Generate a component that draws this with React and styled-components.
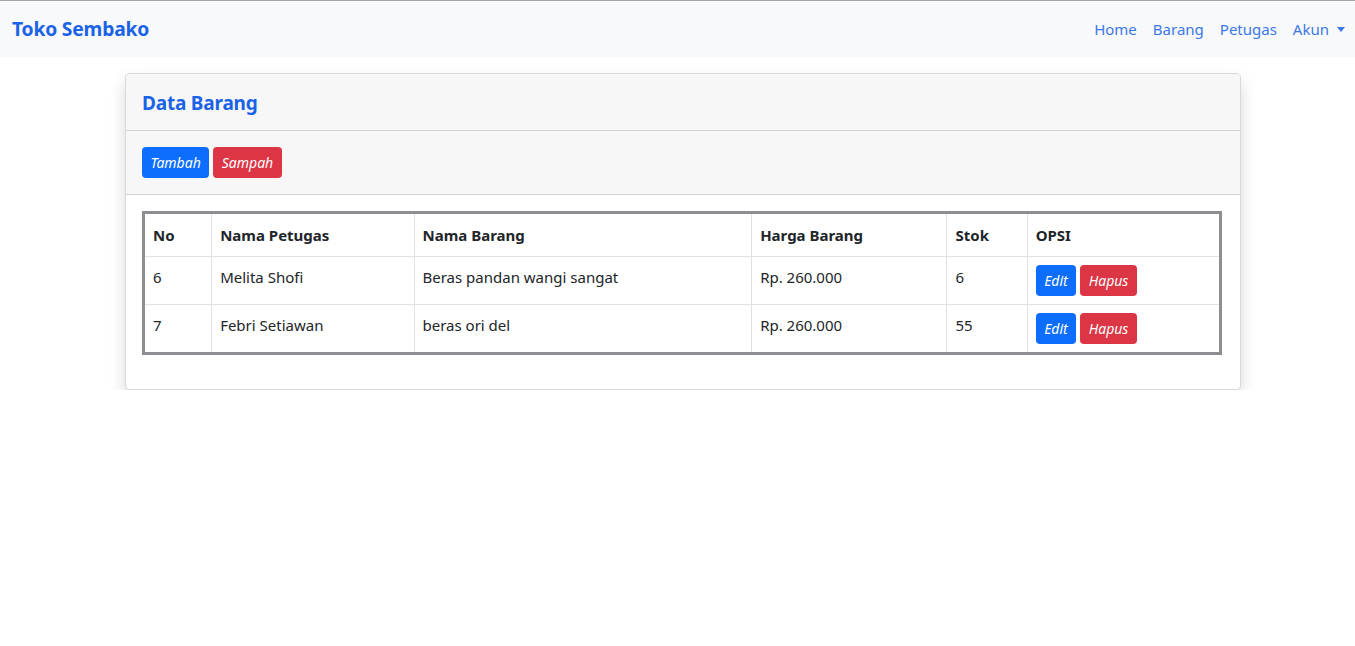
import React from "react";
import styled, { createGlobalStyle } from "styled-components";

const Global = createGlobalStyle`
  * { box-sizing: border-box; }
  html, body { margin: 0; padding: 0; background: #fff; }
  body {
    font-family: "Noto Sans", "Open Sans", sans-serif;
    font-size: 15px;
    line-height: 1.5;
    color: #212529;
    border-top: 1px solid #a6a6a6;
  }
`;

const Navbar = styled.nav`
  display: flex;
  align-items: center;
  justify-content: space-between;
  height: 56px;
  padding: 8px 2px 8px 12px;
  background: #f8f9fa;
`;

const Brand = styled.a`
  font-size: 19.3px;
  font-weight: 700;
  color: #1a63e6;
  text-decoration: none;
  letter-spacing: -0.2px;
`;

const NavList = styled.ul`
  display: flex;
  list-style: none;
  margin: 0;
  padding: 0;
`;

const NavLink = styled.a`
  display: flex;
  align-items: center;
  padding: 9px 8px 8px;
  color: #3b78e7;
  text-decoration: none;
  font-size: 15px;
`;

const Caret = styled.span`
  display: inline-block;
  margin-left: 8px;
  border-top: 5px solid #3b78e7;
  border-left: 4px solid transparent;
  border-right: 4px solid transparent;
`;

const Card = styled.section`
  width: 1116px;
  margin: 16px 0 0 125px;
  border: 1px solid rgba(0, 0, 0, 0.15);
  border-radius: 5px;
  background: #fff;
  box-shadow: 0 8px 16px rgba(0, 0, 0, 0.15);
  overflow: hidden;
`;

const CardHeader = styled.div`
  height: ${(p) => p.$h}px;
  display: flex;
  align-items: center;
  padding: 0 16px;
  background: #f7f7f7;
  border-bottom: 1px solid rgba(0, 0, 0, 0.15);
  gap: 4px;
`;

const Title = styled.h5`
  margin: 2px 0 0;
  font-size: 19px;
  font-weight: 700;
  color: #1a63e6;
  letter-spacing: -0.2px;
`;

const Button = styled.button`
  font-family: inherit;
  font-style: italic;
  font-size: 14px;
  line-height: 21px;
  height: 31px;
  padding: 0 8.5px;
  border: none;
  border-radius: 4px;
  color: #fff;
  background: ${(p) => (p.$danger ? "#dc3545" : "#0d6efd")};
  cursor: pointer;
`;

const CardBody = styled.div`
  padding: 16px 16px 34px;
`;

const Table = styled.table`
  border-collapse: collapse;
  width: 1080px;
  border: 3px solid #8e8e92;
  table-layout: fixed;
`;

const Th = styled.th`
  text-align: left;
  font-weight: 700;
  padding: 9px 8px 8px;
  height: 44px;
  border: 1px solid #dee2e6;
  font-size: 15px;
`;

const Td = styled.td`
  padding: 9px 8px 8px;
  height: 48px;
  vertical-align: top;
  border: 1px solid #dee2e6;
  font-size: 15px;
`;

const ActionCell = styled(Td)`
  padding-top: 8px;
`;

const Actions = styled.div`
  display: flex;
  gap: 4px;
`;

const cols = [68, 202, 337, 195, 80, 193];

const rows = [
  { no: 6, petugas: "Melita Shofi", barang: "Beras pandan wangi sangat", harga: "Rp. 260.000", stok: 6 },
  { no: 7, petugas: "Febri Setiawan", barang: "beras ori del", harga: "Rp. 260.000", stok: 55 },
];

export default function App() {
  return (
    <>
      <Global />
      <Navbar>
        <Brand href="#">Toko Sembako</Brand>
        <NavList>
          <li><NavLink href="#">Home</NavLink></li>
          <li><NavLink href="#">Barang</NavLink></li>
          <li><NavLink href="#">Petugas</NavLink></li>
          <li><NavLink href="#">Akun<Caret /></NavLink></li>
        </NavList>
      </Navbar>
      <Card>
        <CardHeader $h={57}>
          <Title>Data Barang</Title>
        </CardHeader>
        <CardHeader $h={64}>
          <Button>Tambah</Button>
          <Button $danger>Sampah</Button>
        </CardHeader>
        <CardBody>
          <Table>
            <colgroup>
              {cols.map((w, i) => (
                <col key={i} style={{ width: w }} />
              ))}
            </colgroup>
            <thead>
              <tr>
                <Th>No</Th>
                <Th>Nama Petugas</Th>
                <Th>Nama Barang</Th>
                <Th>Harga Barang</Th>
                <Th>Stok</Th>
                <Th>OPSI</Th>
              </tr>
            </thead>
            <tbody>
              {rows.map((r) => (
                <tr key={r.no}>
                  <Td>{r.no}</Td>
                  <Td>{r.petugas}</Td>
                  <Td>{r.barang}</Td>
                  <Td>{r.harga}</Td>
                  <Td>{r.stok}</Td>
                  <ActionCell>
                    <Actions>
                      <Button>Edit</Button>
                      <Button $danger>Hapus</Button>
                    </Actions>
                  </ActionCell>
                </tr>
              ))}
            </tbody>
          </Table>
        </CardBody>
      </Card>
    </>
  );
}
